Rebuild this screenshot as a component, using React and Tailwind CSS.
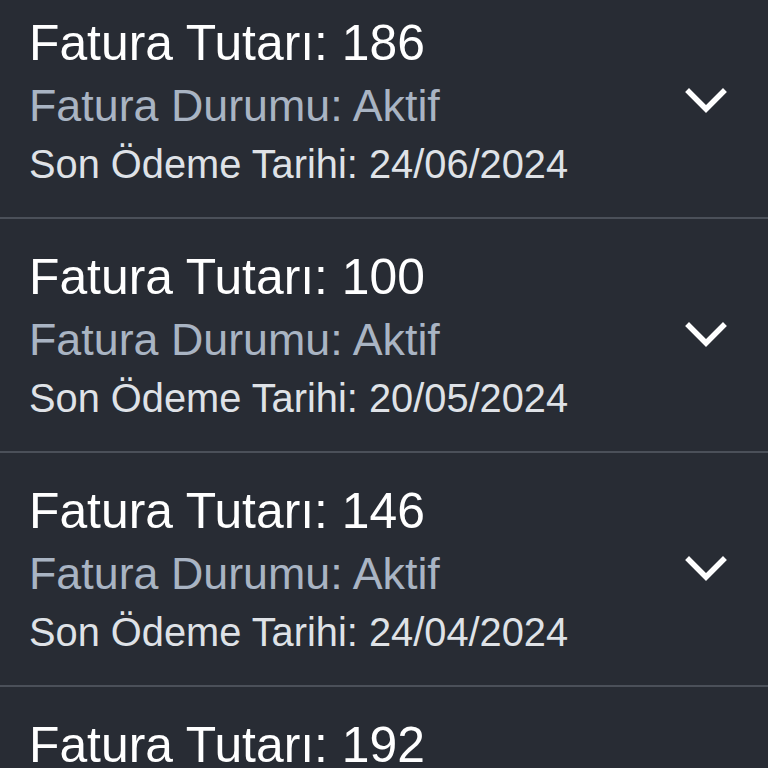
import React from "react";

const bills = [
  { amount: 186, status: "Aktif", date: "24/06/2024" },
  { amount: 100, status: "Aktif", date: "20/05/2024" },
  { amount: 146, status: "Aktif", date: "24/04/2024" },
  { amount: 192, status: "Aktif", date: "24/03/2024" },
];

function Chevron() {
  return (
    <svg width="42" height="28" viewBox="0 0 42 28" className="shrink-0">
      <polyline
        points="4,5 21,22 38,5"
        fill="none"
        stroke="#ffffff"
        strokeWidth="5.5"
        strokeLinecap="square"
        strokeLinejoin="miter"
      />
    </svg>
  );
}

export default function App() {
  return (
    <div
      className="w-[768px] h-[768px] overflow-hidden bg-[#282c34]"
      style={{ fontFamily: '"Liberation Sans", Arial, sans-serif' }}
    >
      <div className="-mt-[15px] flex flex-col">
        {bills.map((b, i) => (
          <div key={i} className="flex flex-col">
            <div className="flex items-center pl-[29px] pr-[41px]">
              <div className="flex-1 flex flex-col pt-[29.5px] pb-[26px]">
                <div className="text-[49.8px] leading-[57px] text-white whitespace-nowrap">
                  Fatura Tutarı: {b.amount}
                </div>
                <div className="text-[44.8px] leading-[66px] text-[#a9b4c3] whitespace-nowrap">
                  Fatura Durumu: {b.status}
                </div>
                <div className="text-[39.8px] leading-[53px] text-[#dfe2e7] whitespace-nowrap">
                  Son Ödeme Tarihi: {b.date}
                </div>
              </div>
              <Chevron />
            </div>
            <div className="h-[2.5px] bg-[#4b5059]" />
          </div>
        ))}
      </div>
    </div>
  );
}
